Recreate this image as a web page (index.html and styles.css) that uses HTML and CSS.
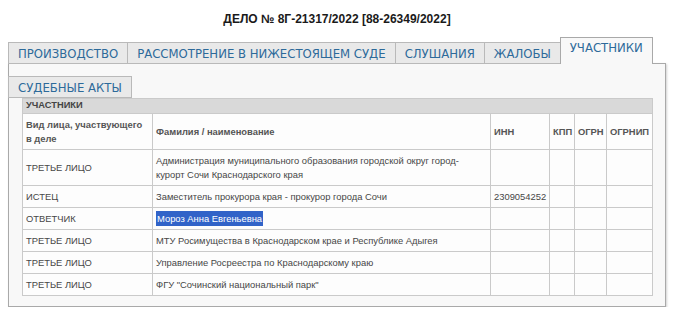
FILE: index.html
```html
<!DOCTYPE html>
<html lang="ru">
<head>
<meta charset="utf-8">
<link rel="stylesheet" href="styles.css">
</head>
<body>
<div class="wrap">
  <h1 class="title">ДЕЛО № 8Г-21317/2022 [88-26349/2022]</h1>
  <div class="tabs">
    <ul class="nav">
      <li class="tab">ПРОИЗВОДСТВО</li>
      <li class="tab">РАССМОТРЕНИЕ В НИЖЕСТОЯЩЕМ СУДЕ</li>
      <li class="tab">СЛУШАНИЯ</li>
      <li class="tab">ЖАЛОБЫ</li>
      <li class="tab active">УЧАСТНИКИ</li>
      <li class="tab">СУДЕБНЫЕ АКТЫ</li>
    </ul>
    <div class="panel">
      <table class="grid">
        <colgroup>
          <col class="c1"><col class="c2"><col class="c3"><col class="c4"><col class="c5"><col class="c6">
        </colgroup>
        <thead>
          <tr><th class="caption" colspan="6">УЧАСТНИКИ</th></tr>
          <tr class="heads">
            <th>Вид лица, участвующего в деле</th>
            <th>Фамилия / наименование</th>
            <th>ИНН</th>
            <th>КПП</th>
            <th>ОГРН</th>
            <th>ОГРНИП</th>
          </tr>
        </thead>
        <tbody>
          <tr><td>ТРЕТЬЕ ЛИЦО</td><td class="name">Администрация муниципального образования городской округ город-курорт Сочи Краснодарского края</td><td></td><td></td><td></td><td></td></tr>
          <tr><td>ИСТЕЦ</td><td class="name">Заместитель прокурора края - прокурор города Сочи</td><td>2309054252</td><td></td><td></td><td></td></tr>
          <tr><td>ОТВЕТЧИК</td><td class="name"><span class="sel">Мороз Анна Евгеньевна</span></td><td></td><td></td><td></td><td></td></tr>
          <tr><td>ТРЕТЬЕ ЛИЦО</td><td class="name">МТУ Росимущества в Краснодарском крае и Республике Адыгея</td><td></td><td></td><td></td><td></td></tr>
          <tr><td>ТРЕТЬЕ ЛИЦО</td><td class="name">Управление Росреестра по Краснодарскому краю</td><td></td><td></td><td></td><td></td></tr>
          <tr><td>ТРЕТЬЕ ЛИЦО</td><td class="name">ФГУ "Сочинский национальный парк"</td><td></td><td></td><td></td><td></td></tr>
        </tbody>
      </table>
    </div>
  </div>
</div>
</body>
</html>
```

FILE: styles.css
```css
html, body {
  margin: 0;
  padding: 0;
  background: #ffffff;
}

.wrap {
  width: 658px;
  margin-left: 8px;
  font-family: "Liberation Sans", Arial, sans-serif;
}

.title {
  margin: 12px 0 0;
  font-size: 12px;
  line-height: 15px;
  font-weight: bold;
  text-align: center;
  color: #1a1a1a;
}

.tabs {
  margin-top: 36px;
  border: 1px solid #a9a9a9;
  background: #f8f8f8;
  box-shadow: 1px 1px 2px rgba(0, 0, 0, 0.18);
}

.nav {
  display: flex;
  flex-wrap: wrap;
  align-items: flex-end;
  row-gap: 12px;
  list-style: none;
  margin: -27px 0 0 -1px;
  padding: 0;
}

.tab {
  box-sizing: border-box;
  height: 22px;
  padding: 0 9px;
  margin-right: -1px;
  border: 1px solid #b9b9b9;
  background: #e9e9e9;
  color: #2d6a9a;
  font-family: "DejaVu Sans", Verdana, sans-serif;
  font-size: 11.7px;
  line-height: 22px;
  white-space: nowrap;
}

.tab.active {
  position: relative;
  z-index: 1;
  height: 27px;
  border-color: #a9a9a9;
  border-bottom: none;
  background: #f8f8f8;
  line-height: 20px;
}

.panel {
  padding: 0 13px 10px;
}

.grid {
  width: 630px;
  table-layout: fixed;
  border-collapse: collapse;
  background: #fdfdfd;
  font-size: 9.4px;
  color: #474747;
}

.c1 { width: 130px; }
.c2 { width: 338px; }
.c3 { width: 59px; }
.c4 { width: 25px; }
.c5 { width: 32px; }
.c6 { width: 46px; }

.grid th,
.grid td {
  border: 1px solid #cacaca;
  padding: 4px 1px 3px 3px;
  line-height: 14px;
  text-align: left;
  vertical-align: middle;
  overflow: hidden;
}

.grid th {
  font-weight: bold;
  color: #555555;
}

.heads th:first-child {
  padding-right: 8px;
}

.grid td.name {
  padding-right: 22px;
}

.grid .caption {
  background: #d9d9d9;
  font-size: 9.3px;
  line-height: 11px;
  padding: 1px 3px 2px;
  color: #444444;
}

.sel {
  background: #3163c8;
  color: #ffffff;
  padding: 2px 1px;
}
```
